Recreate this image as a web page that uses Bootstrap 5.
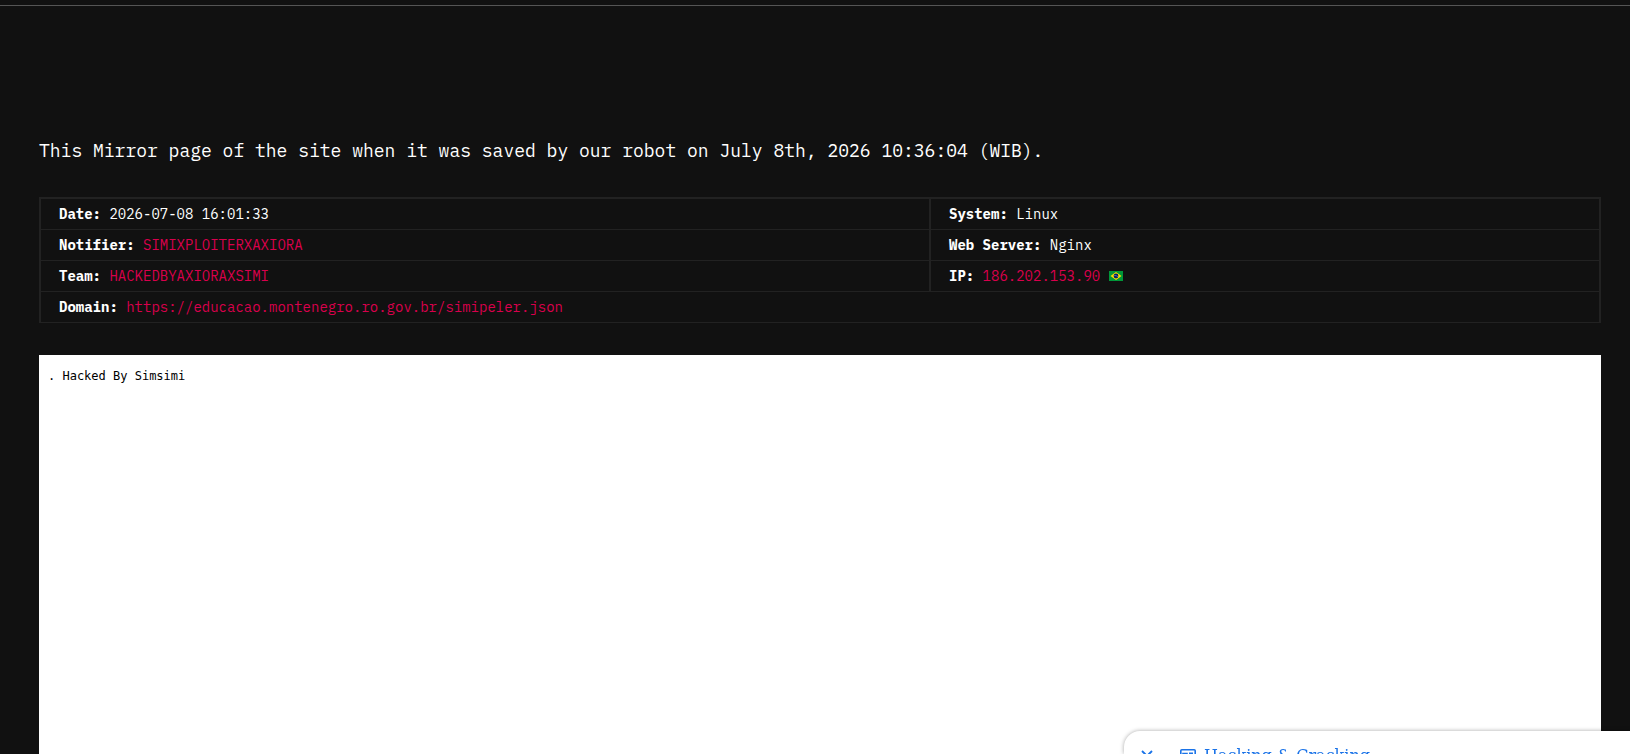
<!DOCTYPE html>
<html lang="en">
<head>
<meta charset="utf-8">
<meta name="viewport" content="width=device-width, initial-scale=1">
<title>Mirror</title>
<link href="https://cdn.jsdelivr.net/npm/bootstrap@5.3.0/dist/css/bootstrap.min.css" rel="stylesheet">
<style>
body{background:#111;color:#fff;font-family:"IBM Plex Mono","Liberation Mono",monospace;font-size:14px;font-weight:400;height:100vh}
.topline{height:6px;border-bottom:1px solid #555}
.page-wrap{padding:131px 29px 0 39px}
.headline{font-size:18px;line-height:28px;font-weight:400;margin:0 0 32px}
.info{border:2px solid #222;border-bottom:0}
.cell{height:31px;line-height:30px;padding-left:18px;border-bottom:1px solid #222;white-space:pre}
.cell b{font-weight:700}
.left-col{width:890px;border-right:2px solid #222}
.info a{color:#d9004c;text-decoration:none}
.flag{width:14px;height:10px;vertical-align:0}
.mirror{background:#fff;color:#000;margin-top:32px;padding:13px 9px}
.mirror pre{font:12px/16px "DejaVu Sans Mono",monospace;margin:0}
.sheet{width:506px;height:23px;background:#fff;border-top-left-radius:16px;box-shadow:0 0 4px rgba(0,0,0,.35);color:#1a73e8}
.sheet span{font:16px/20px "DejaVu Serif",serif}
</style>
</head>
<body class="d-flex flex-column overflow-hidden">
<div class="topline flex-shrink-0"></div>
<main class="page-wrap d-flex flex-column flex-grow-1">
  <h1 class="headline">This Mirror page of the site when it was saved by our robot on July 8th, 2026 10:36:04 (WIB).</h1>
  <section class="info">
    <div class="d-flex">
      <div class="left-col flex-shrink-0">
        <div class="cell"><b>Date:</b> 2026-07-08 16:01:33</div>
        <div class="cell"><b>Notifier:</b> <a href="#">SIMIXPLOITERXAXIORA</a></div>
        <div class="cell"><b>Team:</b> <a href="#">HACKEDBYAXIORAXSIMI</a></div>
      </div>
      <div class="flex-grow-1">
        <div class="cell"><b>System:</b> Linux</div>
        <div class="cell"><b>Web Server:</b> Nginx</div>
        <div class="cell"><b>IP:</b> <a href="#">186.202.153.90</a> <svg class="flag" viewBox="0 0 14 10"><path fill="#009739" d="M0 0h14v10H0z"/><path fill="#fedd00" d="M7 1l5.500 4L7 9 1.500 5z"/><circle cx="7" cy="5" r="2.400" fill="#012169"/><path d="M5 4.300q2.500 0 4 1.500" fill="none" stroke="#9fb3c8" stroke-width=".5"/></svg></div>
      </div>
    </div>
    <div class="cell"><b>Domain:</b> <a href="#">https://educacao.montenegro.ro.gov.br/simipeler.json</a></div>
  </section>
  <section class="mirror flex-grow-1"><pre>. Hacked By Simsimi</pre></section>
</main>
<aside class="sheet position-fixed bottom-0 end-0">
  <div class="d-flex" style="padding:15px 0 0 17px">
    <svg width="12" height="16" viewBox="0 0 12 16" fill="none" stroke="#1a73e8" stroke-width="1.800" style="margin-top:4px"><path d="M1 1l5 5 5-5"/></svg>
    <svg width="16" height="16" viewBox="0 0 16 16" fill="none" stroke="#1a73e8" stroke-width="1.600" style="margin:3px 8px 0 27px"><rect x=".8" y=".8" width="14.400" height="12.400" rx="1"/><path d="M3 4.500h4v4H3zM9 4.300h4M9 7h4M3 10.500h10"/></svg>
    <span>Hacking &amp; Cracking</span>
  </div>
</aside>
<script src="https://cdn.jsdelivr.net/npm/bootstrap@5.3.0/dist/js/bootstrap.bundle.min.js"></script>
</body>
</html>
